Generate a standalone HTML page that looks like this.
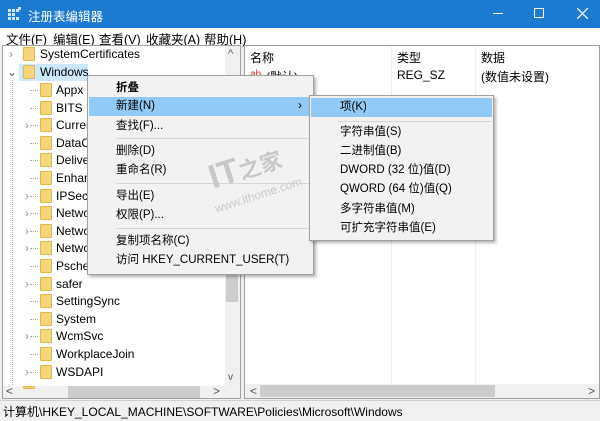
<!DOCTYPE html>
<html><head><meta charset="utf-8"><style>
*{margin:0;padding:0;box-sizing:border-box}
body{width:600px;height:421px;overflow:hidden;background:#f0f0f0;font-family:"Liberation Sans","Noto Sans CJK SC",sans-serif;font-size:12px;color:#000;position:relative}
.a{position:absolute;white-space:nowrap}
.fold{position:absolute;width:12px;height:14px;background:#f6d67a;border:1px solid #e2b84c;border-radius:1px}
.t{position:absolute;font-size:12px;line-height:17px}
.mi{position:absolute;left:28px;font-size:11.5px;line-height:18px}
.sep{position:absolute;height:1px;background:#d6d6d6}
</style></head><body>
<div class="a" style="left:0;top:0;width:600px;height:28px;background:#1a7bd0"></div>
<svg class="a" style="left:8px;top:7px" width="14" height="14"><g fill="#cfe6fb"><rect x="0" y="2" width="3" height="3"/><rect x="4" y="2" width="3" height="3"/><rect x="8" y="2" width="3" height="3"/><rect x="0" y="6" width="3" height="3"/><rect x="4" y="6" width="3" height="3"/><rect x="0" y="10" width="3" height="3"/><rect x="4" y="10" width="3" height="3"/><rect x="8" y="10" width="3" height="3"/><rect x="10" y="0" width="3" height="3"/></g></svg>
<div class="a" style="left:28px;top:6px;color:#fff;font-size:12.5px">注册表编辑器</div>
<div class="a" style="left:493px;top:13px;width:10px;height:1px;background:#fff"></div>
<div class="a" style="left:534px;top:8px;width:10px;height:10px;border:1px solid #fff"></div>
<svg class="a" style="left:577px;top:8px" width="11" height="11"><path d="M0 0L11 11M11 0L0 11" stroke="#fff" stroke-width="1.2"/></svg>
<div class="a" style="left:0;top:28px;width:600px;height:17px;background:#fff"></div>
<div class="a" style="left:6px;top:29px;font-size:12.5px">文件(F)</div>
<div class="a" style="left:53px;top:29px;font-size:12.5px">编辑(E)</div>
<div class="a" style="left:99px;top:29px;font-size:12.5px">查看(V)</div>
<div class="a" style="left:146px;top:29px;font-size:12.5px">收藏夹(A)</div>
<div class="a" style="left:204px;top:29px;font-size:12.5px">帮助(H)</div>
<div class="a" style="left:2px;top:45px;width:239px;height:354px;background:#fff;border:1px solid #a0a0a0"></div>
<div class="a" style="left:225px;top:46px;width:15px;height:340px;background:#f0f0f0"></div>
<div class="a" style="left:226px;top:240px;width:12px;height:62px;background:#cdcdcd"></div>
<div class="a" style="left:228px;top:48px;color:#555;font-size:11px">^</div>
<div class="a" style="left:228px;top:372px;color:#555;font-size:10px">v</div>
<div class="a" style="left:3px;top:386px;width:237px;height:12px;background:#f0f0f0"></div>
<div class="a" style="left:68px;top:386px;width:132px;height:12px;background:#cdcdcd"></div>
<div class="a" style="left:6px;top:384px;color:#555">&lt;</div>
<div class="a" style="left:213px;top:384px;color:#555">&gt;</div>
<div class="a" style="left:19px;top:64px;width:69px;height:17px;background:#cce8ff"></div>
<div class="a" style="left:12px;top:80px;width:1px;height:305px;border-left:1px dotted #aaa"></div>
<div class="t" style="left:9px;top:46px;color:#888">›</div>
<div class="t" style="left:7px;top:64px;color:#555">⌄</div>
<div class="fold" style="left:23px;top:47px"></div><div class="t" style="left:40px;top:46px">SystemCertificates</div>
<div class="fold" style="left:23px;top:65px"></div><div class="t" style="left:40px;top:64px">Windows</div>
<div id="tr"></div>
<div class="a" style="left:244px;top:45px;width:356px;height:354px;background:#fff;border:1px solid #a0a0a0"></div>
<div class="a" style="left:391px;top:46px;width:1px;height:337px;background:#f0f0f0"></div>
<div class="a" style="left:475px;top:46px;width:1px;height:337px;background:#f0f0f0"></div>
<div class="a" style="left:250px;top:49px">名称</div>
<div class="a" style="left:397px;top:49px">类型</div>
<div class="a" style="left:481px;top:49px">数据</div>
<div class="a" style="left:250px;top:69px;color:#c33;font-size:10px">ab</div>
<div class="a" style="left:266px;top:68px">(默认)</div>
<div class="a" style="left:397px;top:68px">REG_SZ</div>
<div class="a" style="left:481px;top:68px">(数值未设置)</div>
<div class="a" style="left:245px;top:384px;width:354px;height:14px;background:#f0f0f0"></div>
<div class="a" style="left:260px;top:385px;width:235px;height:12px;background:#cdcdcd"></div>
<div class="a" style="left:250px;top:384px;color:#555">&lt;</div>
<div class="a" style="left:588px;top:384px;color:#555">&gt;</div>
<div class="a" style="left:0;top:400px;width:600px;height:21px;background:#f0f0f0;border-top:1px solid #d0d0d0"></div>
<div class="a" style="left:3px;top:403px">计算机\HKEY_LOCAL_MACHINE\SOFTWARE\Policies\Microsoft\Windows</div>
<div class="a" style="left:87px;top:75px;width:227px;height:200px;background:#f2f2f2;border:1px solid #a0a0a0;box-shadow:2px 2px 3px rgba(0,0,0,.3)">
<div class="a" style="left:1px;top:21px;width:223px;height:19px;background:#91c9f7"></div>
<div class="mi" style="top:3px;font-weight:bold">折叠</div>
<div class="mi" style="top:21px">新建(N)</div>
<div class="a" style="left:210px;top:22px">›</div>
<div class="mi" style="top:41px">查找(F)...</div>
<div class="sep" style="left:28px;width:195px;top:62px"></div>
<div class="mi" style="top:66px">删除(D)</div>
<div class="mi" style="top:85px">重命名(R)</div>
<div class="sep" style="left:28px;width:195px;top:107px"></div>
<div class="mi" style="top:111px">导出(E)</div>
<div class="mi" style="top:130px">权限(P)...</div>
<div class="sep" style="left:28px;width:195px;top:152px"></div>
<div class="mi" style="top:156px">复制项名称(C)</div>
<div class="mi" style="top:175px">访问 HKEY_CURRENT_USER(T)</div>
<div class="a" style="left:120px;top:72px;color:#c8c8c8;font-size:34px;font-weight:bold;transform:rotate(-18deg)">IT<span style="font-size:22px">之家</span></div>
<div class="a" style="left:125px;top:112px;color:#c8c8c8;font-size:12px;transform:rotate(-18deg)">www.ithome.com</div>
</div>
<div class="a" style="left:309px;top:95px;width:185px;height:146px;background:#f2f2f2;border:1px solid #a0a0a0;box-shadow:2px 2px 3px rgba(0,0,0,.3)">
<div class="a" style="left:1px;top:2px;width:181px;height:19px;background:#91c9f7"></div>
<div class="mi" style="left:30px;top:2px">项(K)</div>
<div class="sep" style="left:28px;width:154px;top:25px"></div>
<div class="mi" style="left:30px;top:27px">字符串值(S)</div>
<div class="mi" style="left:30px;top:46px">二进制值(B)</div>
<div class="mi" style="left:30px;top:65px">DWORD (32 位)值(D)</div>
<div class="mi" style="left:30px;top:84px">QWORD (64 位)值(Q)</div>
<div class="mi" style="left:30px;top:104px">多字符串值(M)</div>
<div class="mi" style="left:30px;top:123px">可扩充字符串值(E)</div>
</div>
<script>
var n=["Appx","BITS","CurrentVersion","DataCollection","DeliveryOptimization","EnhancedStorage","IPSec","NetworkConnectivity","NetworkConnections","NetworkProvider","Psched","safer","SettingSync","System","WcmSvc","WorkplaceJoin","WSDAPI"];
var ex={2:1,6:1,7:1,8:1,9:1,11:1,14:1,16:1};
var h="";
for(var i=0;i<n.length;i++){var y=82+i*17.6;
h+='<div class="a" style="left:30px;top:'+(y+8)+'px;width:8px;border-top:1px dotted #aaa"></div>';
if(ex[i])h+='<div class="t" style="left:25px;top:'+y+'px;color:#999">›</div>';
h+='<div class="fold" style="left:40px;top:'+(y+1)+'px"></div><div class="t" style="left:56px;top:'+y+'px">'+n[i]+'</div>';}
h+='<div class="fold" style="left:23px;top:386px;height:3px"></div>';
document.getElementById("tr").outerHTML=h;
</script>
</body></html>
